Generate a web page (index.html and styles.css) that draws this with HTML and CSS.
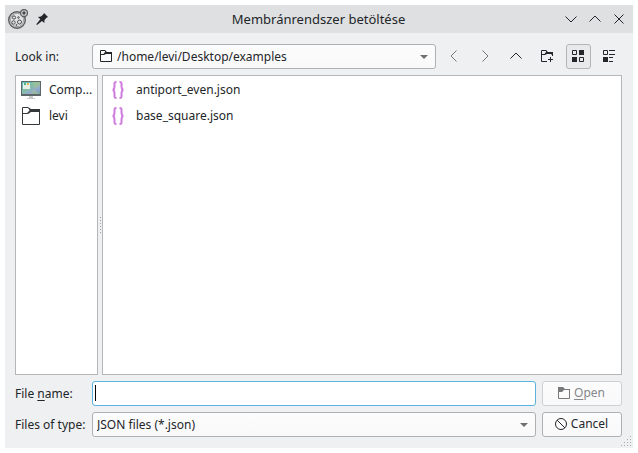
FILE: index.html
```html
<!DOCTYPE html>
<html lang="hu">
<head>
<meta charset="utf-8">
<title>Membránrendszer betöltése</title>
<link rel="stylesheet" href="styles.css">
</head>
<body>
<main class="window">
  <header class="titlebar">
    <div class="title-side">
      <svg class="app-icon" width="20" height="20" viewBox="0 0 20 20" fill="none" stroke="#4b4d4f">
        <circle cx="9" cy="11" r="8.3" stroke="#5c5e60" stroke-width="1.4" fill="#d2d3d4"/>
        <circle cx="9" cy="11" r="6.6" stroke="#888a8c" stroke-width=".7" fill="#e3e4e5"/>
        <circle cx="6" cy="8.500" r="1.600"/><circle cx="5.500" cy="13.500" r="1.700"/><circle cx="11.500" cy="13" r="2"/><circle cx="10.500" cy="8.500" r=".8"/><circle cx="8.500" cy="16" r=".6"/>
        <circle cx="16" cy="4" r="3.500" stroke="#5c5e60" stroke-width="1.300" fill="#cfd0d1"/>
        <circle cx="16" cy="4" r="1.200" fill="#3b3d3f"/>
      </svg>
      <button class="title-button pin" aria-label="Pin">
        <svg width="12" height="12" viewBox="0 0 12 12"><path d="M8 0l4 4-1.500.8L8.500 7 8.300 10 6 8 1 12 .3 11.300 4.300 6.300 2 4l3-.4L7.200 1.500z" fill="#232629"/></svg>
      </button>
    </div>
    <h1 class="title">Membránrendszer betöltése</h1>
    <div class="title-side title-end">
      <button class="title-button" aria-label="Minimize"><svg width="12" height="12" viewBox="0 0 12 12"><path d="M.5 3.500L6 9l5.500-5.500"/></svg></button>
      <button class="title-button" aria-label="Maximize"><svg width="12" height="12" viewBox="0 0 12 12"><path d="M.5 8.500L6 3l5.500 5.500"/></svg></button>
      <button class="title-button" aria-label="Close"><svg width="12" height="12" viewBox="0 0 12 12"><path d="M1.500 1.500l9 9M10.500 1.500l-9 9"/></svg></button>
    </div>
  </header>

  <form class="content">
    <div class="row">
      <label class="label" for="lookin">Look in:</label>
      <div class="combo">
        <svg class="combo-icon" width="12" height="12" viewBox="0 0 12 12"><path d="M.5.500H5L6.500 2.500H11.500V11.500H.5z" fill="none" stroke="#232629"/><path d="M5 0l1.500 2H12v2H6L4 5H1V4h2.500L5 2z" fill="#232629"/></svg>
        <select class="field select with-icon" id="lookin"><option>/home/levi/Desktop/examples</option></select>
        <svg class="arrow" width="8" height="4" viewBox="0 0 8 4"><path d="M0 0h8L4 4z"/></svg>
      </div>
      <nav class="tools">
        <button type="button" class="tool" aria-label="Back" disabled><svg width="12" height="12" viewBox="0 0 12 12"><path d="M8.500.5L3 6l5.500 5.500"/></svg></button>
        <button type="button" class="tool" aria-label="Forward" disabled><svg width="12" height="12" viewBox="0 0 12 12"><path d="M3.500.5L9 6l-5.500 5.500"/></svg></button>
        <button type="button" class="tool" aria-label="Parent directory"><svg width="12" height="12" viewBox="0 0 12 12"><path d="M.5 8.500L6 3l5.500 5.500"/></svg></button>
        <button type="button" class="tool" aria-label="Create new folder"><svg width="12" height="12" viewBox="0 0 12 12"><path d="M6 11.500H.5V.5H5L6.500 2.500H11.500V6M9.500 7v5M7 9.500h5"/><path class="solid" d="M5 0l1.500 2H12v3H10.500V4H6L4 5H1V4h2.500L5 2z"/></svg></button>
        <button type="button" class="tool active" aria-label="List view" aria-pressed="true"><svg width="12" height="12" viewBox="0 0 12 12"><path d="M.5.5h4v4h-4zM7.500 7.500h4v4h-4z"/><path class="solid" d="M7 0h5v5H7zM0 7h5v5H0z"/></svg></button>
        <button type="button" class="tool" aria-label="Detail view"><svg width="12" height="12" viewBox="0 0 12 12"><path d="M.5.5h4v4h-4zM6 .5h6M6 4.500h6M6 7.500h4M6 11.500h4"/><path class="solid" d="M0 7h5v5H0z"/></svg></button>
      </nav>
    </div>

    <div class="panels">
      <ul class="panel places">
        <li class="item">
          <svg width="20" height="20" viewBox="0 0 20 20">
            <defs><linearGradient id="screen" x2="1" y2="1"><stop offset="0" stop-color="#5bb7cc"/><stop offset=".45" stop-color="#86bda4"/><stop offset=".7" stop-color="#93a8d4"/><stop offset="1" stop-color="#7ba5a2"/></linearGradient></defs>
            <path d="M0 1h20v15H0z" fill="#5d6669"/><path d="M1 2h18v12H1z" fill="url(#screen)"/>
            <path d="M11 2h8v4l-5 3zM9 14l4-5 5 5z" fill="#a9c48b" opacity=".5"/>
            <path d="M2 3h7v6H2z" fill="#e5eee7"/><path d="M3 3h2v2H3z" fill="#48b97b"/><path d="M6 3h2v2H6z" fill="#e6b64b"/>
            <path d="M8 16h4v2h2v1H6v-1h2z" fill="#c9ccce"/>
          </svg>
          <span class="name">Comp...</span>
        </li>
        <li class="item">
          <svg width="20" height="20" viewBox="0 0 20 20"><path d="M1.500 1.500H7L9.500 4H18.500V18.500H1.500z" fill="none" stroke="#35383b"/><path d="M7 1l3 2h9v3h-9L7 8H1V7h5l2.500-2.500z" fill="#35383b"/></svg>
          <span class="name">levi</span>
        </li>
      </ul>
      <div class="splitter"><span class="grip-dots"></span></div>
      <ul class="panel files">
        <li class="item">
          <svg class="json" width="12" height="18" viewBox="0 0 12 18"><path d="M4.500 1C2 1 2.500 2.500 2.500 5S2.500 9 .5 9C2.500 9 2.500 10.500 2.500 13S2 17 4.500 17M7.500 1C10 1 9.500 2.500 9.500 5S9.500 9 11.500 9C9.500 9 9.500 10.500 9.500 13S10 17 7.500 17"/></svg>
          <span class="name">antiport_even.json</span>
        </li>
        <li class="item">
          <svg class="json" width="12" height="18" viewBox="0 0 12 18"><path d="M4.500 1C2 1 2.500 2.500 2.500 5S2.500 9 .5 9C2.500 9 2.500 10.500 2.500 13S2 17 4.500 17M7.500 1C10 1 9.500 2.500 9.500 5S9.500 9 11.500 9C9.500 9 9.500 10.500 9.500 13S10 17 7.500 17"/></svg>
          <span class="name">base_square.json</span>
        </li>
      </ul>
    </div>

    <div class="row">
      <label class="label" for="filename">File <u>n</u>ame:</label>
      <div class="combo"><input class="field input" id="filename" type="text" autocomplete="off"><span class="caret"></span></div>
      <button type="submit" class="field push" disabled>
        <svg width="12" height="12" viewBox="0 0 12 12"><path d="M.5 1V11.500H11.500V2.500H6" fill="none" stroke="#77797b"/><path d="M0 0h5l2 2h5v1H6L4 5H0z" fill="#77797b"/></svg>
        <span><u>O</u>pen</span>
      </button>
    </div>
    <div class="row">
      <label class="label" for="filetype">Files of type:</label>
      <div class="combo">
        <select class="field select" id="filetype"><option>JSON files (*.json)</option></select>
        <svg class="arrow" width="8" height="4" viewBox="0 0 8 4"><path d="M0 0h8L4 4z"/></svg>
      </div>
      <button type="button" class="field push">
        <svg width="12" height="12" viewBox="0 0 12 12"><path d="M2 2l8 8" stroke="#232629"/><circle cx="6" cy="6" r="5.500" fill="none" stroke="#232629"/></svg>
        <span>Cancel</span>
      </button>
    </div>
  </form>
  <svg class="resize" width="11" height="11" viewBox="0 0 11 11"><path d="M9 0h1v1H9zM6 3h1v1H6zM9 3h1v1H9zM3 6h1v1H3zM6 6h1v1H6zM9 6h1v1H9zM0 9h1v1H0zM3 9h1v1H3zM6 9h1v1H6zM9 9h1v1H9z" fill="#a9abad"/></svg>
</main>
</body>
</html>
```
FILE: styles.css
```css
* { box-sizing: border-box; }

body {
  margin: 0;
  padding: 5px;
  min-height: 100vh;
  display: flex;
  background: #fff;
  color: #232629;
  font: 12px/16px "Noto Sans", sans-serif;
}

button, input, select { font: inherit; color: inherit; }

.window {
  position: relative;
  flex: 1;
  min-width: 0;
  display: flex;
  flex-direction: column;
  background: #eff0f1;
}

.titlebar {
  display: flex;
  align-items: center;
  height: 28px;
  padding: 0 8px 0 3px;
  background: #dee0e2;
}
.title-side {
  flex: 1;
  display: flex;
  align-items: center;
  gap: 8px;
}
.title-end {
  justify-content: flex-end;
  gap: 12px;
}
.title {
  margin: 0;
  padding-left: 4px;
  font-size: 13px;
  font-weight: 400;
}
.title-button {
  display: flex;
  padding: 0;
  border: 0;
  background: none;
}
.title-end path { fill: none; stroke: #232629; }

.content {
  flex: 1;
  display: flex;
  flex-direction: column;
  gap: 6px;
  padding: 11px 11px 11px 10px;
}
.row {
  display: flex;
  align-items: center;
  gap: 6px;
}
.label { width: 71px; white-space: nowrap; }
u { text-underline-offset: 2px; }

.combo {
  position: relative;
  flex: 1;
  min-width: 0;
  display: flex;
}
.field {
  height: 25px;
  border: 1px solid #aeb0b2;
  border-radius: 3px;
  background: linear-gradient(#fcfcfc, #f9f9fa);
}
.select {
  flex: 1;
  min-width: 0;
  padding: 0 20px 0 4px;
  appearance: none;
}
.with-icon { padding-left: 24px; }
.combo-icon { position: absolute; left: 8px; top: 6px; }
.arrow {
  position: absolute;
  right: 8px;
  top: 11px;
  fill: #6d6f71;
  pointer-events: none;
}
.input {
  flex: 1;
  min-width: 0;
  padding: 0 4px;
  border-color: #5cb3e0;
  background: #fff;
  outline: 0;
}
.caret {
  position: absolute;
  left: 3px;
  top: 4px;
  width: 1px;
  height: 16px;
  background: #000;
}
.push {
  display: flex;
  align-items: center;
  justify-content: center;
  gap: 4px;
  width: 80px;
  padding: 0 1px 1px 0;
}
.push:disabled { border-color: #cfd0d1; color: #85878a; }

.tools { display: flex; gap: 6px; }
.tool {
  display: flex;
  align-items: center;
  justify-content: center;
  width: 25px;
  height: 25px;
  padding: 0 1px 1px 0;
  border: 1px solid transparent;
  border-radius: 3px;
  background: none;
}
.tool path { fill: none; stroke: #232629; }
.tool .solid { fill: #232629; stroke: none; }
.tool:disabled path { stroke: #77797b; }
.active { border-color: #b3b5b6; background: #e8e9ea; }

.panels { flex: 1; display: flex; }
.panel {
  margin: 0;
  padding: 1px 0 0;
  border: 1px solid #b4b6b8;
  background: #fff;
  list-style: none;
}
.places { width: 83px; }
.files { flex: 1; }
.item {
  display: flex;
  align-items: center;
  gap: 8px;
  height: 26px;
  padding: 0 0 0 5px;
}
.files .item { gap: 12px; padding-left: 9px; }
.name { white-space: nowrap; }
.item svg { flex: none; }
.json path { fill: none; stroke: #d07be0; stroke-width: 2; }
.splitter {
  display: flex;
  align-items: center;
  justify-content: center;
  width: 4px;
}
.grip-dots {
  width: 1px;
  height: 16px;
  background: repeating-linear-gradient(#a0a2a4 0 1px, transparent 1px 3px);
}
.resize { position: absolute; right: 1px; bottom: 1px; }
```
